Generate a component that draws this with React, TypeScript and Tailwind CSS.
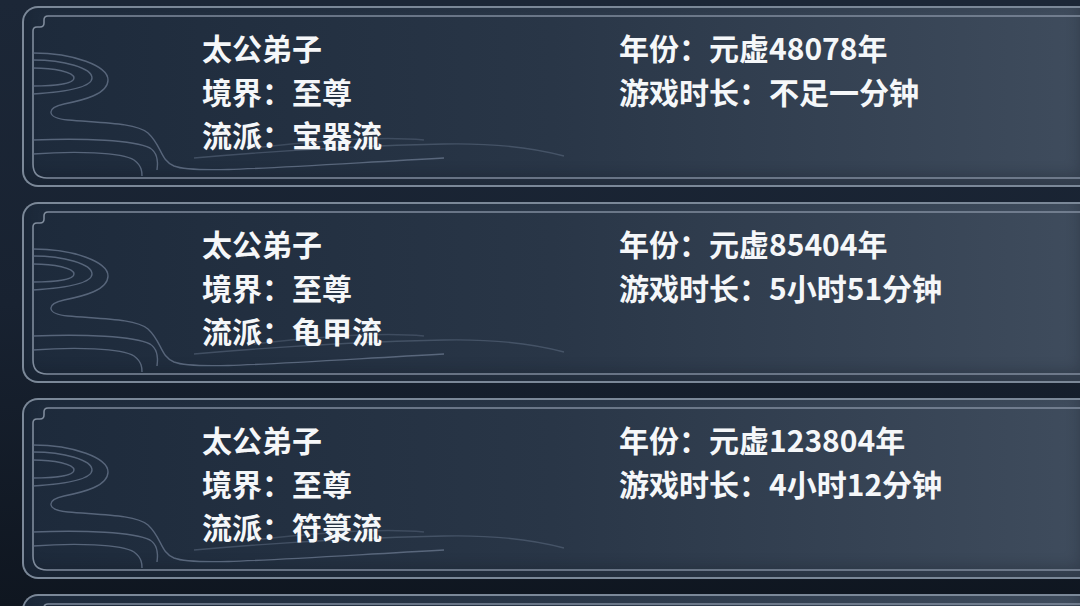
import React from "react";

type Rec = { realm: string; school: string; year: string; time: string };

const records: Rec[] = [
  { realm: "至尊", school: "宝器流", year: "元虚48078年", time: "不足一分钟" },
  { realm: "至尊", school: "龟甲流", year: "元虚85404年", time: "5小时51分钟" },
  { realm: "至尊", school: "符箓流", year: "元虚123804年", time: "4小时12分钟" },
];

function Ornament() {
  const s = "#8a96a6";
  const d = "#66748a";
  return (
    <svg
      className="pointer-events-none absolute left-0 top-0"
      width={1056}
      height={177}
      viewBox="0 0 1056 177"
      fill="none"
    >
      <path
        d="M1056 8 H24 Q20 8 20 12 V15 Q20 19 16 19 H13 Q9 19 9 23 V156 Q9 170 23 170 H1056"
        stroke={s}
        strokeWidth={1.6}
        opacity={0.9}
      />
      <g stroke={d} strokeWidth={1.4} opacity={0.8}>
        <path d="M9 45 C50 45 84 58 84 72 C84 86 60 92 40 96 C22 100 22 110 44 112 C80 115 112 115 124 125 C138 138 136 152 150 158 C170 166 240 160 420 150" />
        <path d="M9 52 C40 52 68 60 68 70 C68 80 40 84 9 86" />
        <path d="M9 60 C30 60 50 64 50 70 C50 76 30 78 9 78" />
        <path d="M9 132 C60 130 110 132 126 140 C134 145 134 155 133 162" />
        <path d="M9 146 C50 143 98 144 110 152 C118 158 118 164 118 168" />
        <path d="M170 150 C260 142 330 138 420 136 C470 135 510 140 540 148" opacity={0.6} />
        <path d="M230 140 C300 132 360 128 400 132" opacity={0.5} />
      </g>
    </svg>
  );
}

function Frame({ children }: { children?: React.ReactNode }) {
  return (
    <div className="relative ml-[22px] h-[181px] shrink-0 rounded-l-[16px] border-2 border-r-0 border-[#7b8898] bg-gradient-to-r from-[#1d2a3b] via-[#293647] to-[#3f4c5d] shadow-[inset_0_-10px_14px_rgba(10,15,25,0.25)]">
      <Ornament />
      {children}
    </div>
  );
}

function Card({ r }: { r: Rec }) {
  return (
    <Frame>
      <div className="relative grid grid-cols-[417px_1fr] pl-[178px] pt-[18px] text-[30px] font-bold leading-[43.5px] text-[#f5f7f9]">
        <div className="flex flex-col">
          <span>太公弟子</span>
          <span>境界：{r.realm}</span>
          <span>流派：{r.school}</span>
        </div>
        <div className="flex flex-col">
          <span>年份：{r.year}</span>
          <span>游戏时长：{r.time}</span>
        </div>
      </div>
    </Frame>
  );
}

export default function App() {
  return (
    <div
      className="flex h-[606px] w-[1080px] flex-col gap-[15px] overflow-hidden bg-gradient-to-b from-[#1c2737] via-[#182231] to-[#0f1620] pt-[6px]"
      style={{ fontFamily: '"Noto Sans CJK SC", "Noto Sans", sans-serif' }}
    >
      {records.map((r, i) => (
        <Card key={i} r={r} />
      ))}
      <Frame />
    </div>
  );
}
